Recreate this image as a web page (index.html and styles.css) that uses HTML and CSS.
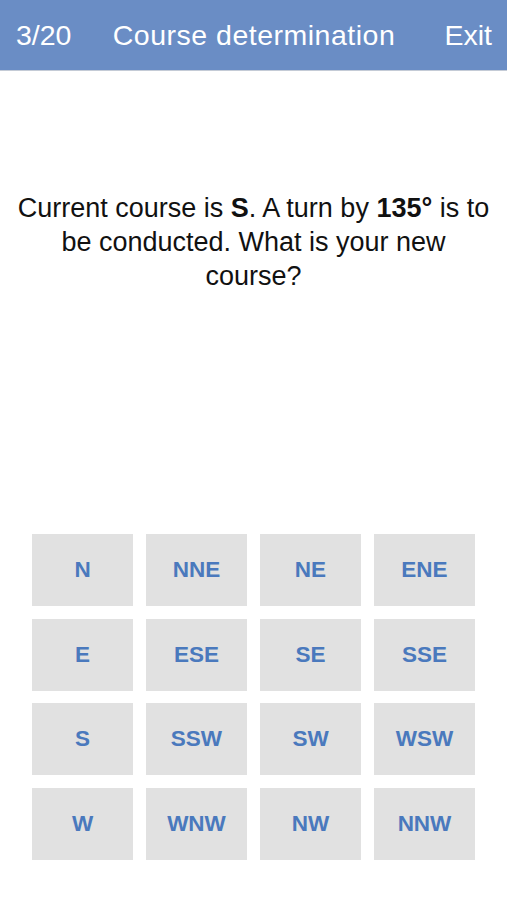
FILE: index.html
```html
<!DOCTYPE html>
<html>
    <head lang="en">
        <meta charset="UTF-8">
        <title>Course determination</title>
        <link rel="stylesheet" href="styles.css">
    </head>
    <body>
        <div id="header">
            <span class="count">3/20</span>
            <span class="title">Course determination</span>
            <span class="exit">Exit</span>
        </div>
        <div id="question">
            Current course is <b>S</b>. A turn by <b>135°</b> is to be conducted. What is your new course?
        </div>
        <ul id="answers">
            <li>N</li>
            <li>NNE</li>
            <li>NE</li>
            <li>ENE</li>
            <li>E</li>
            <li>ESE</li>
            <li>SE</li>
            <li>SSE</li>
            <li>S</li>
            <li>SSW</li>
            <li>SW</li>
            <li>WSW</li>
            <li>W</li>
            <li>WNW</li>
            <li>NW</li>
            <li>NNW</li>
        </ul>
    </body>
</html>
```
FILE: styles.css
```css
*{
    margin:0;
    padding:0;
}
ul{
    list-style:none;
}
body{
    font-family:"Liberation Sans", Arial, sans-serif;
    background:#fff;
    width:507px;
}
#header{
    height:70px;
    background:#6a8dc5;
    border-bottom:1px solid #c4cbd6;
    color:#fff;
    font-size:28.5px;
    display:grid;
    grid-template-columns:1fr auto 1fr;
    align-items:center;
    padding:0 15px 0 16px;
}
#header .title{
    font-weight:500;
    letter-spacing:0.5px;
}
#header .exit{
    justify-self:end;
}
#question{
    margin-top:120px;
    padding:0 16px;
    text-align:center;
    font-size:27px;
    line-height:34px;
    color:#111;
}
#answers{
    margin:241px 32px 0;
    display:grid;
    grid-template-columns:repeat(4, 101px);
    grid-auto-rows:72px;
    column-gap:13px;
    row-gap:12.5px;
}
#answers li{
    background:#e1e1e1;
    color:#4a79bd;
    font-weight:bold;
    font-size:22.5px;
    display:flex;
    align-items:center;
    justify-content:center;
    cursor:pointer;
}
```
